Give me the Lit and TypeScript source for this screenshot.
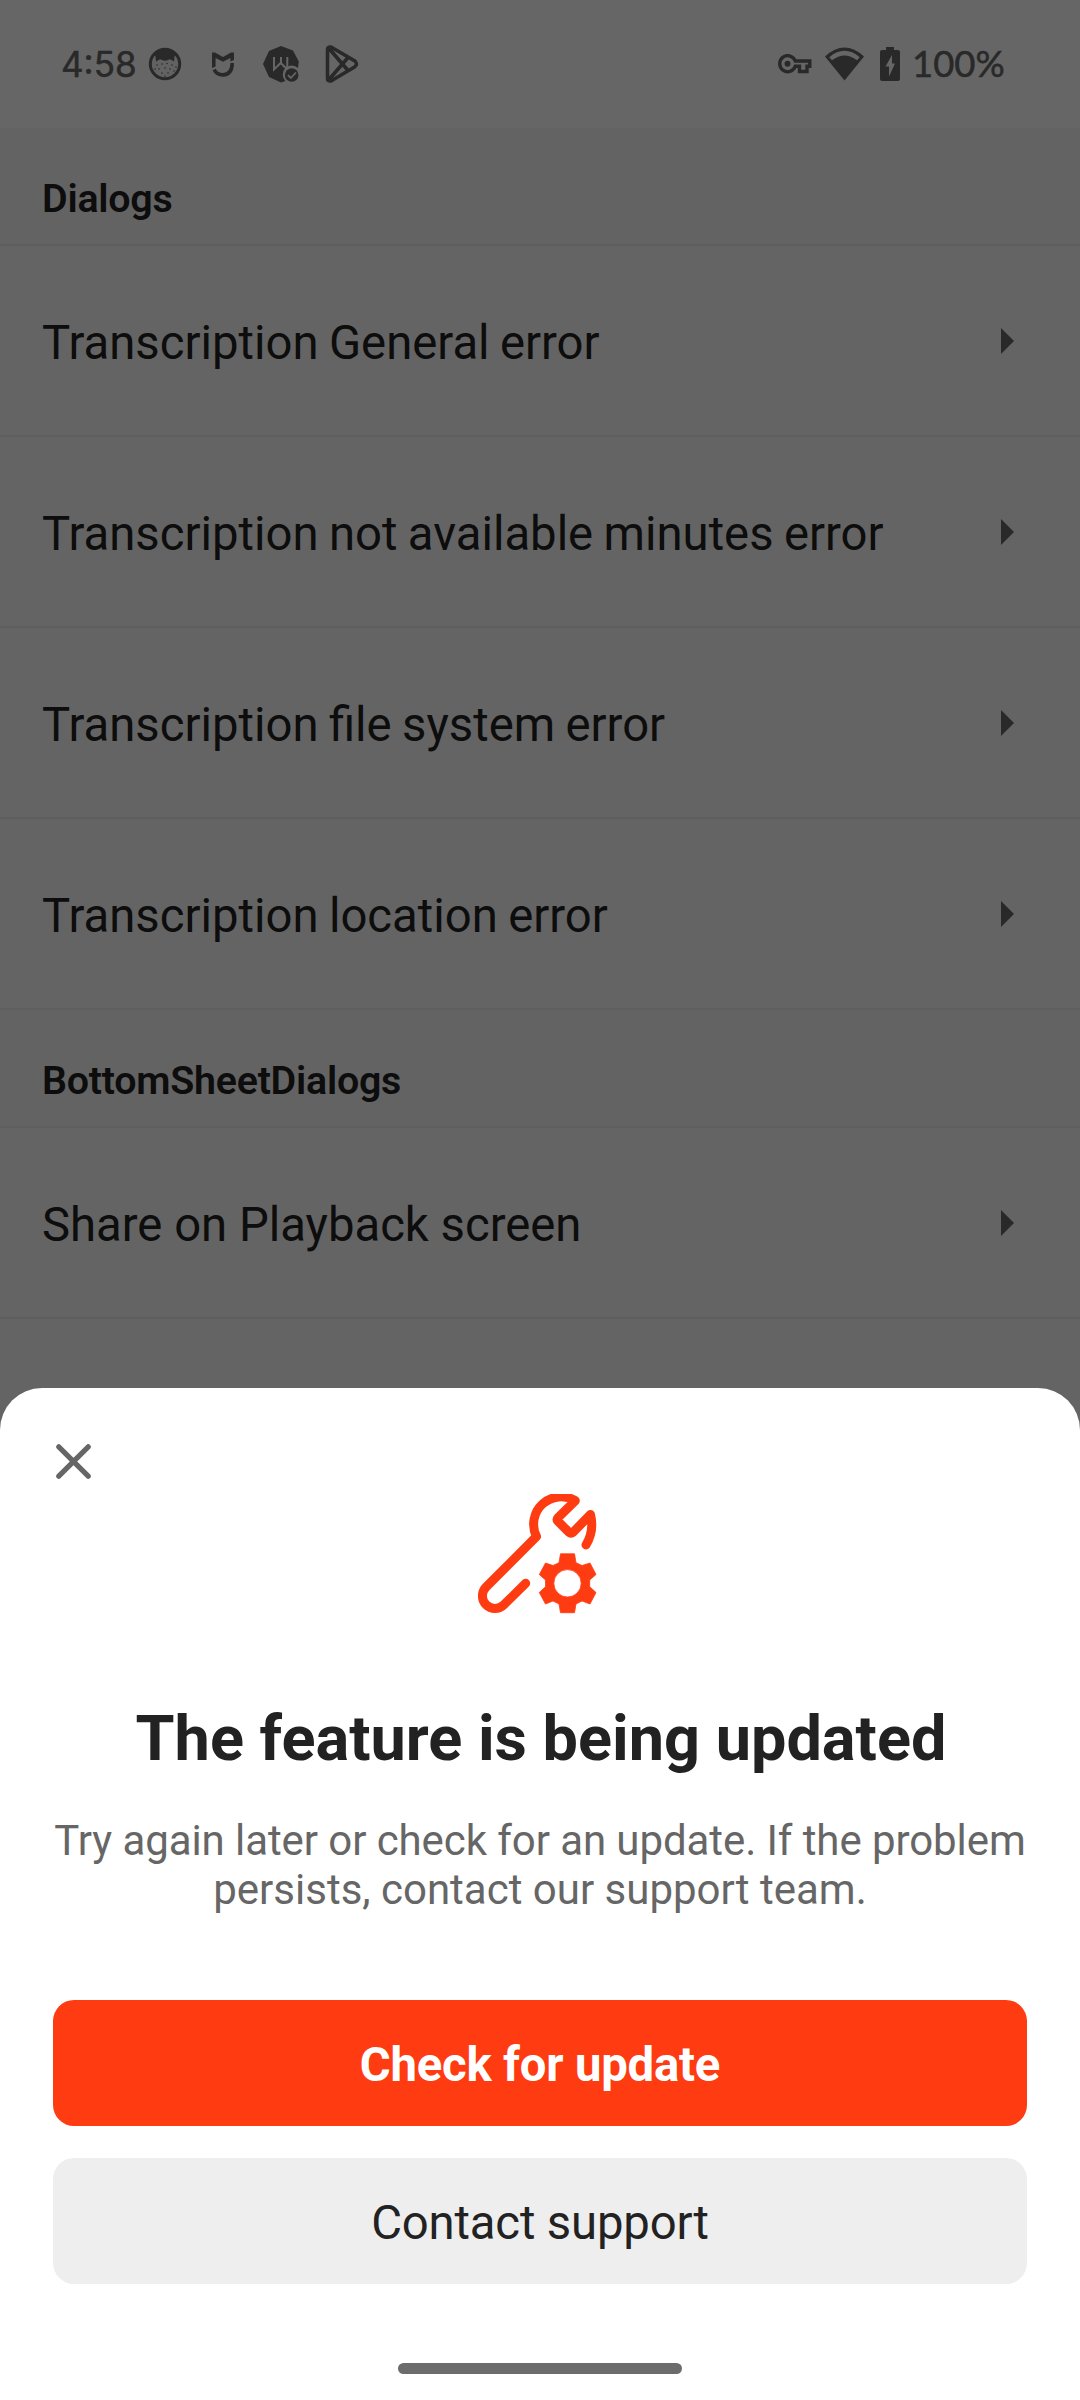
import { LitElement, html, css, svg } from "lit";
import { customElement } from "lit/decorators.js";

interface Section {
  title: string;
  items: string[];
}

const SECTIONS: Section[] = [
  {
    title: "Dialogs",
    items: [
      "Transcription General error",
      "Transcription not available minutes error",
      "Transcription file system error",
      "Transcription location error",
    ],
  },
  { title: "BottomSheetDialogs", items: ["Share on Playback screen"] },
];

@customElement("status-bar")
class StatusBar extends LitElement {
  static styles = css`
    :host {
      display: flex;
      align-items: center;
      justify-content: space-between;
      height: 128px;
      padding: 0 76px 0 61px;
      box-sizing: border-box;
      background: #fff;
      color: #666;
      font-family: Inter, Roboto, sans-serif;
    }
    .side {
      display: flex;
      align-items: center;
    }
    .clock {
      font-size: 35px;
      font-weight: 400;
      -webkit-text-stroke: 0.5px currentColor;
      line-height: 40px;
      width: 87px;
      white-space: nowrap;
    }
    .percent {
      font-family: Lato, Roboto, sans-serif;
      font-size: 36.5px;
      -webkit-text-stroke: 0.5px currentColor;
      line-height: 40px;
      width: 92px;
      padding-bottom: 3px;
      white-space: nowrap;
    }
    svg {
      display: block;
      fill: currentColor;
    }
    .bear { margin-right: 30px; }
    .mi { margin-right: 29px; }
    .w { margin-right: 26px; }
    .key { margin-right: 13px; }
    .wifi { margin-right: 16px; }
    .battery { margin-right: 12px; }
  `;

  render() {
    return html`
      <div class="side">
        <span class="clock">4:58</span>
        <svg class="bear" width="34" height="34" viewBox="0 0 34 34">
          <circle cx="17" cy="17" r="14.700" fill="#f4f4f4" stroke="currentColor" stroke-width="3" />
          <path d="M6.500 8Q17-3 27.500 8L26.500 9.500 26 14.500 22 12.300Q17 15 12 12.300L8 14.500 7.500 9.500Z" />
          ${[[9, 18], [14, 17], [19, 16.5], [24, 18], [28, 20], [11, 22], [17, 21], [22, 22], [26, 24], [14, 26], [20, 26], [17, 29], [7, 22]].map(
            ([x, y]) => svg`<circle cx=${x} cy=${y} r="0.8" />`,
          )}
        </svg>
        <svg class="mi" width="22" height="25" viewBox="0 0 22 25">
          <path d="M0 .5H3L11 5 19 .5H22V8L18.400 9.500V6L11 9.700 3.600 6V14.500L0 16Z" />
          <path d="M2.200 17.500Q4.500 22.900 11 22.900 20.200 22.500 20.200 11" fill="none" stroke="currentColor" stroke-width="3.600" />
        </svg>
        <svg class="w" width="36" height="37" viewBox="0 0 36 37">
          <path d="M18 0 30 4.500 35.800 15.500 35 22A8 8 0 0 0 22.500 35L18 36.500 6 31 0 18 6 5Z" />
          <path d="M11 11V23.500L17.700 17 24.300 23.500V11M18 11V17" fill="none" stroke="#fff" stroke-width="2" />
          <circle cx="28.700" cy="29" r="8.200" fill="#fff" />
          <circle cx="28.700" cy="29" r="6.800" />
          <path d="M25 29.200 27.800 32 33 26.500" fill="none" stroke="#fff" stroke-width="1.800" />
        </svg>
        <svg width="34" height="38" viewBox="0 0 34 38">
          <path
            d="M2.500 4.500Q2.500 1.500 6 2L29.500 15.700Q33.500 19 29.500 22L6 36Q2.500 36.500 2.500 33.500ZM4 3.500 23.500 26M4 34.500 23.500 12"
            fill="none" stroke="currentColor" stroke-width="3.600" stroke-linejoin="round" />
        </svg>
      </div>
      <div class="side">
        <svg class="key" width="34" height="20" viewBox="0 0 34 20">
          <path
            d="M17.300 7H31.800V12.300H29V17.500H21.500V12.300H17.300A8 8 0 1 1 17.300 7Z"
            fill="none" stroke="currentColor" stroke-width="3.400" />
          <circle cx="9.500" cy="9.700" r="3" />
        </svg>
        <svg class="wifi" width="39" height="34" viewBox="0 0 39 34">
          <path d="M19.500 33.500 0 9.500Q19.500-8.500 39 9.500ZM4.300 10.200 7 13.300Q19.500 3.500 32 13.300L34.700 10.200Q19.500-2.500 4.300 10.200Z" fill-rule="evenodd" />
        </svg>
        <svg class="battery" width="20" height="34" viewBox="0 0 20 34">
          <path d="M6 0H14V3H18Q20 3 20 5V32Q20 34 18 34H2Q0 34 0 32V5Q0 3 2 3H6ZM12 8 5.500 19.500H9V29.500L15 16.500H12Z" fill-rule="evenodd" />
        </svg>
        <span class="percent">100%</span>
      </div>
    `;
  }
}

@customElement("settings-list")
class SettingsList extends LitElement {
  static styles = css`
    :host {
      display: block;
      color: #222;
    }
    .header,
    .row {
      box-sizing: border-box;
      padding-left: 42px;
      border-bottom: 2px solid #ebebeb;
      background: #fafafa;
      white-space: nowrap;
    }
    .header {
      height: 118px;
      padding-top: 48px;
      background: #f7f7f7;
      font-size: 39.375px;
      font-weight: 600;
      letter-spacing: -0.24px;
      line-height: 46px;
    }
    .row {
      display: flex;
      align-items: center;
      justify-content: space-between;
      height: 191px;
      padding-right: 66px;
      font-size: 47.25px;
      word-spacing: -1.3px;
      line-height: 56px;
    }
    .header ~ .header ~ .row {
      word-spacing: 0;
    }
    .label {
      padding-top: 4px;
    }
    .arrow {
      display: block;
      fill: #666;
    }
  `;

  render() {
    return SECTIONS.map(
      (section) => html`
        <div class="header">${section.title}</div>
        ${section.items.map(
          (item) => html`
            <div class="row">
              <span class="label">${item}</span>
              <svg class="arrow" width="13" height="26" viewBox="0 0 13 26"><path d="M0 0 13 13 0 26Z" /></svg>
            </div>
          `,
        )}
      `,
    );
  }
}

@customElement("update-sheet")
class UpdateSheet extends LitElement {
  static styles = css`
    :host {
      display: flex;
      flex-direction: column;
      box-sizing: border-box;
      padding: 0 53px;
      background: #fff;
      border-radius: 42px 42px 0 0;
      color: #222;
      text-align: center;
    }
    svg {
      display: block;
    }
    .close {
      margin: 56px 0 0 3px;
    }
    .tool {
      margin: 15px 0 0 425px;
    }
    .title {
      margin: 88px -2px 0 0;
      font-size: 63px;
      font-weight: 700;
      line-height: 74px;
      white-space: nowrap;
    }
    .message {
      margin: 40px -10px 0;
      color: #666;
      font-size: 42px;
      line-height: 49px;
    }
    .lead {
      letter-spacing: -0.08px;
    }
    .button {
      display: block;
      width: 100%;
      height: 126px;
      padding: 3px 0 0;
      border: 0;
      border-radius: 21px;
      font: 400 47.25px/56px Roboto, sans-serif;
      letter-spacing: -0.15px;
      color: #222;
      background: #eee;
    }
    .primary {
      margin: 86px 0 32px;
      color: #fff;
      background: #ff3b12;
      font-weight: 700;
      letter-spacing: -0.2px;
    }
    .handle {
      align-self: center;
      width: 284px;
      height: 11px;
      margin-top: 79px;
      border-radius: 6px;
      background: #6c6c6c;
    }
  `;

  render() {
    return html`
      <svg class="close" width="35" height="35" viewBox="0 0 35 35">
        <path d="M2.800 2.800 32.200 32.200M32.200 2.800 2.800 32.200" stroke="#666" stroke-width="5.200" stroke-linecap="round" />
      </svg>
      <svg class="tool" width="120" height="120" viewBox="0 0 120 120" fill="#ff3b12">
        <path
          d="M47.700 89.300 25.900 110.800A12.500 12.500 0 0 1 8.100 93L58.500 42.500A27.500 27.500 0 0 1 97.300 6.700L79.700 24Q78.500 25.500 79.700 27L91 38.300Q93 40 95 38.300L112.500 20.500Q116.500 37 108 51"
          fill="none" stroke="#ff3b12" stroke-width="9" stroke-linecap="round" stroke-linejoin="round" />
        <path
          d="M82.500 59.800H96.500L98 68.700 104 71.500 112 69 118 80.500 111.700 86V92.700L118 98.500 112 110 104 107 98 110 96.500 118.700H82.500L81 110 75 107 67.500 110 61.300 98.500 67.500 92.700V86L61.300 80.500 67.500 69 75 71.500 81 68.700ZM89.500 75.600A13.700 13.700 0 1 0 89.500 103A13.700 13.700 0 1 0 89.500 75.600Z"
          fill-rule="evenodd" stroke="#ff3b12" stroke-width=".8" stroke-linejoin="round" />
      </svg>
      <h1 class="title">The feature is being updated</h1>
      <p class="message">
        <span class="lead">Try again later or check for an update. If the problem</span><br />persists, contact our support team.
      </p>
      <button class="button primary">Check for update</button>
      <button class="button">Contact support</button>
      <div class="handle"></div>
    `;
  }
}

@customElement("app-root")
class AppRoot extends LitElement {
  static styles = css`
    :host {
      display: block;
      position: relative;
      height: 2400px;
      overflow: hidden;
      background: #fafafa;
      font-family: Roboto, sans-serif;
    }
    .scrim {
      position: absolute;
      inset: 0;
      background: rgba(0, 0, 0, 0.6);
    }
    .sheet {
      position: absolute;
      left: 0;
      right: 0;
      bottom: 0;
      height: 1012px;
    }
  `;

  render() {
    return html`
      <status-bar></status-bar>
      <settings-list></settings-list>
      <div class="scrim"></div>
      <update-sheet class="sheet"></update-sheet>
    `;
  }
}
